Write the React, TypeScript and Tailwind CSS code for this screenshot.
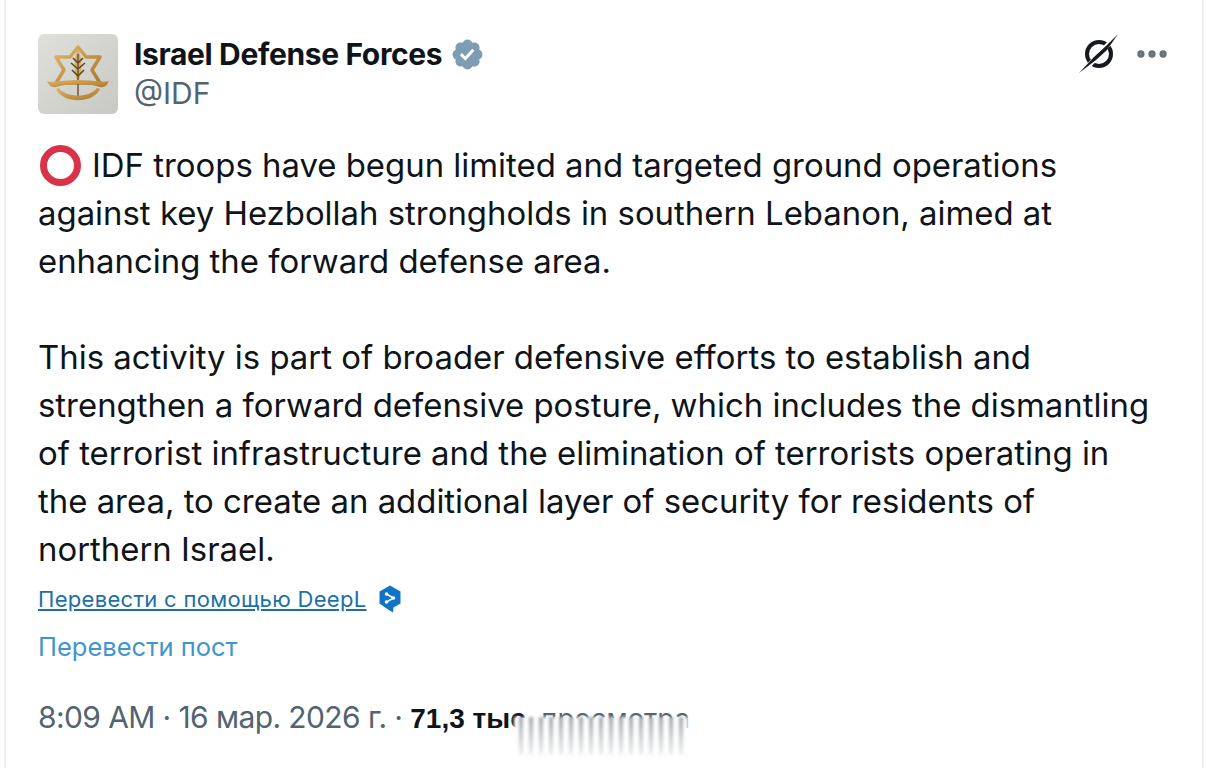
import React from 'react';
import { MoreHorizontal } from 'lucide-react';

const PARAGRAPH_ONE = [
  'against key Hezbollah strongholds in southern Lebanon, aimed at',
  'enhancing the forward defense area.',
];

const PARAGRAPH_TWO = [
  'This activity is part of broader defensive efforts to establish and',
  'strengthen a forward defensive posture, which includes the dismantling',
  'of terrorist infrastructure and the elimination of terrorists operating in',
  'the area, to create an additional layer of security for residents of',
  'northern Israel.',
];

// Army badge, drawn roughly: star of david with sword/olive branch
function Badge() {
  return (
    <svg viewBox="0 0 80 80" className="h-20 w-20">
      <defs>
        <linearGradient id="gold" x1="0" y1="0" x2="1" y2="1">
          <stop offset="0" stopColor="#dcb873" />
          <stop offset="0.55" stopColor="#c4913f" />
          <stop offset="1" stopColor="#a87a35" />
        </linearGradient>
      </defs>
      <path
        d="M40 13 L48 23 L62 23 L54 36 L62 49 L18 49 L26 36 L18 23 L32 23 Z"
        fill="none"
        stroke="url(#gold)"
        strokeWidth="3.4"
        strokeLinejoin="round"
      />
      <path d="M40 14 C44 24 45 36 40 49 C35 36 36 24 40 14 Z" fill="#d6ae6a" />
      <path d="M40 20 V64" stroke="#5f4820" strokeWidth="1.3" />
      <path
        d="M40 29 L35 24 M40 29 L45 24 M40 35 L33 29 M40 35 L47 29 M40 42 L34 36 M40 42 L46 36"
        stroke="#5f4820"
        strokeWidth="1.6"
      />
      <path
        d="M9 47 C15 49 24 46 40 46 C56 46 65 49 71 47 C69 52 66 54 62 53 C56 51 48 50 40 50 C32 50 24 51 18 53 C14 54 11 52 9 47 Z"
        fill="url(#gold)"
      />
      <path d="M18 55 C25 70 55 70 62 55 L59 54 C52 64 28 64 21 54 Z" fill="url(#gold)" />
    </svg>
  );
}

function VerifiedBadge() {
  return (
    <svg viewBox="0 0 22 22" className="h-[35px] w-[35px]">
      <path
        fill="#7d9db5"
        d="M20.396 11c-.018-.646-.215-1.275-.57-1.816-.354-.54-.852-.972-1.438-1.246.223-.607.27-1.264.14-1.897-.131-.634-.437-1.218-.882-1.687-.47-.445-1.053-.75-1.687-.882-.633-.13-1.29-.083-1.897.14-.273-.587-.704-1.086-1.245-1.44S11.647 1.62 11 1.604c-.646.017-1.273.213-1.813.568s-.969.854-1.24 1.44c-.608-.223-1.267-.272-1.902-.14-.635.13-1.22.436-1.69.882-.445.47-.749 1.055-.878 1.688-.13.633-.08 1.29.144 1.896-.587.274-1.087.705-1.443 1.245-.356.54-.555 1.17-.574 1.817.02.647.218 1.276.574 1.817.356.54.856.972 1.443 1.245-.224.606-.274 1.263-.144 1.896.13.634.433 1.218.877 1.688.47.443 1.054.747 1.687.878.633.132 1.29.084 1.897-.136.274.586.705 1.084 1.246 1.439.54.354 1.17.551 1.816.569.647-.016 1.276-.213 1.817-.567s.972-.854 1.245-1.44c.604.239 1.266.296 1.903.164.636-.132 1.22-.447 1.68-.907.46-.46.776-1.044.908-1.681s.075-1.299-.165-1.903c.586-.274 1.084-.705 1.439-1.246.354-.54.551-1.17.569-1.816z"
      />
      <path fill="#ffffff" d="M9.662 14.85l-3.429-3.428 1.293-1.302 2.072 2.072 4.4-4.794 1.347 1.246z" />
    </svg>
  );
}

function SlashedCircleIcon() {
  return (
    <svg viewBox="0 0 44 44" className="h-11 w-11">
      <circle cx="22" cy="22" r="12" fill="none" stroke="#16191d" strokeWidth="4" />
      <path d="M4 42 L40 3" stroke="#ffffff" strokeWidth="5" />
      <path d="M2 41 L17 25 L29 14 L41 2 L30 18 L19 28 Z" fill="#16191d" />
    </svg>
  );
}

function DeepLIcon() {
  return (
    <svg viewBox="0 0 24 28" className="h-[28px] w-[24px]">
      <path
        d="M12 0.5 L22.5 6.5 V18.5 L15.5 22.5 L15 27.5 L10 24.5 L1.5 18.5 V6.5 Z"
        fill="#0f74c8"
        strokeLinejoin="round"
      />
      <path d="M8.5 9 L15.5 13 L8.5 17" fill="none" stroke="#ffffff" strokeWidth="1.6" />
      <circle cx="8.5" cy="9" r="1.8" fill="#ffffff" />
      <circle cx="15.5" cy="13" r="1.8" fill="#ffffff" />
      <circle cx="8.5" cy="17" r="1.8" fill="#ffffff" />
    </svg>
  );
}

export default function App() {
  return (
    <div className="h-[768px] w-[1206px] overflow-hidden bg-white font-['Inter',sans-serif] text-[#0f1419]">
      <div className="ml-[4px] mr-[2px] h-full border-x-2 border-[#f0f0f0] pl-[32px] pr-[31px] pt-[34px]">
        {/* Header */}
        <div className="flex items-start justify-between">
          <div className="flex gap-[16px]">
            <div className="flex h-20 w-20 items-center justify-center rounded-md bg-gradient-to-br from-[#dfdfdb] to-[#c9c9c4]">
              <Badge />
            </div>
            <div className="flex flex-col">
              <div className="flex h-[41px] items-center gap-[8px]">
                <span className="text-[30px] font-bold tracking-[-0.35px]">Israel Defense Forces</span>
                <VerifiedBadge />
              </div>
              <span className="text-[30px] leading-[36px] text-[#536471]">@IDF</span>
            </div>
          </div>
          <div className="-mt-[2px] flex items-center gap-[12px]">
            <SlashedCircleIcon />
            <MoreHorizontal className="h-[38px] w-[38px] text-[#66717a]" strokeWidth={2.6} />
          </div>
        </div>

        {/* Tweet body */}
        <div className="mt-[2px] text-[32.9px] leading-[48px]">
          <div className="mt-[27px] flex items-center whitespace-nowrap">
            <span className="ml-[2px] mr-[11px] h-[41px] w-[41px] rounded-full border-[7px] border-[#d93349]" />
            IDF troops have begun limited and targeted ground operations
          </div>
          {PARAGRAPH_ONE.map((line) => (
            <div key={line} className="whitespace-nowrap">{line}</div>
          ))}
          <div className="h-[48px]" />
          {PARAGRAPH_TWO.map((line) => (
            <div key={line} className="whitespace-nowrap">{line}</div>
          ))}
        </div>

        {/* Translate links */}
        <div className="mt-[2px] flex h-[48px] items-center gap-[12px]">
          <span className="text-[22px] tracking-[0.3px] text-[#1d6fa5] underline underline-offset-2">
            Перевести с помощью DeepL
          </span>
          <DeepLIcon />
        </div>
        <div className="text-[25.5px] leading-[48px] text-[#3f95cd]">Перевести пост</div>

        {/* Meta row */}
        <div className="relative mt-[22px] whitespace-nowrap text-[30px] leading-[48px] tracking-[-0.6px] text-[#536471]">
          <span>8:09 AM · 16 мар. 2026 г. · </span>
          <span className="font-['Liberation_Sans',sans-serif] text-[28px] font-bold tracking-normal text-[#0f1419]">71,3 тыс.</span>
          <span className="text-[27.5px] tracking-normal"> просмотра</span>
          {/* smeared strip over the views count */}
          <div className="absolute left-[476px] top-[24px] h-[38px] w-[174px] bg-[linear-gradient(180deg,rgba(255,255,255,0)_0%,rgba(255,255,255,0.85)_100%),repeating-linear-gradient(90deg,#ffffff_0px,#ffffff_4px,#80858a_7px,#ffffff_10px)] blur-[1.5px]" />
        </div>
      </div>
    </div>
  );
}
